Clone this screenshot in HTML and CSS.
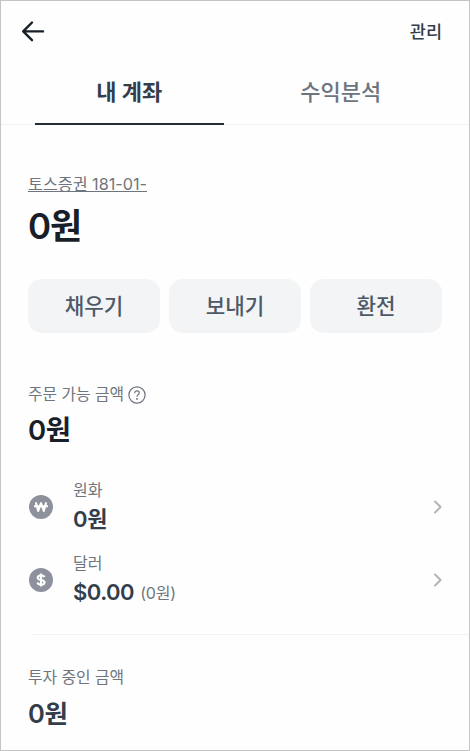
FILE: index.html
```html
<!DOCTYPE html>
<html lang="ko">

<head>
	<meta charset="utf-8">
	<title>내 계좌</title>
	<link rel="stylesheet" href="styles.css">
</head>

<body>
	<div class="screen">
		<header class="topbar">
			<svg class="back" width="24" height="24" viewBox="0 0 24 24">
				<path d="M22 12.4H2.4M11 3.5L2.2 12.4L11 21.2" />
			</svg>
			<span class="manage">관리</span>
		</header>

		<nav class="tabs">
			<div class="tab active">내 계좌</div>
			<div class="tab">수익분석</div>
		</nav>

		<section class="account">
			<div><a class="label account-number">토스증권 181-01-</a></div>
			<div class="total">0원</div>
			<div class="buttons">
				<button>채우기</button>
				<button>보내기</button>
				<button>환전</button>
			</div>
		</section>

		<section class="orderable">
			<div class="label">
				<span>주문 가능 금액</span>
				<svg class="help" width="18" height="18" viewBox="0 0 18 18">
					<circle cx="9" cy="9" r="8.1" />
					<path d="M6.7 7.2C6.7 5.7 7.7 4.8 9 4.8S11.3 5.7 11.3 7C11.3 8.6 9 8.6 9 10.7" />
					<circle class="dot" cx="9" cy="13" r="0.9" />
				</svg>
			</div>
			<div class="amount">0원</div>

			<div class="currency">
				<svg class="coin" width="24" height="24" viewBox="0 0 24 24">
					<circle cx="12" cy="12" r="12" />
					<path d="M6.8 7.4L9.2 15.9L12 8.2L14.8 15.9L17.2 7.4M5 11.3H19" />
				</svg>
				<div class="info">
					<div class="name">원화</div>
					<div class="value">0원</div>
				</div>
				<svg class="chevron" width="10" height="14" viewBox="0 0 10 14">
					<path d="M2 1.5L7.6 7L2 12.5" />
				</svg>
			</div>

			<div class="currency">
				<svg class="coin" width="24" height="24" viewBox="0 0 24 24">
					<circle cx="12" cy="12" r="12" />
					<path d="M15.4 9.2C15 8 13.6 7.4 12 7.4C10 7.4 8.7 8.3 8.7 9.7C8.7 12.8 15.6 11 15.6 14.3C15.6 15.7 14 16.6 12.1 16.6C10.2 16.6 8.8 15.8 8.4 14.5M12 5.6V18.4" />
				</svg>
				<div class="info">
					<div class="name">달러</div>
					<div class="value dollar">$0.00 <span class="converted">(0원)</span></div>
				</div>
				<svg class="chevron" width="10" height="14" viewBox="0 0 10 14">
					<path d="M2 1.5L7.6 7L2 12.5" />
				</svg>
			</div>
		</section>

		<section class="invested">
			<div class="label">투자 중인 금액</div>
			<div class="amount">0원</div>
		</section>
	</div>
</body>

</html>
```
FILE: styles.css
```css
* {
	box-sizing: border-box;
}

body {
	margin: 0;
	font-family: Inter, "Noto Sans CJK KR", sans-serif;
	color: #191f28;
}

.screen {
	width: 470px;
	height: 751px;
	overflow: hidden;
	background: #fefefe;
	border: 1px solid #c4c4c4;
}

.topbar {
	display: flex;
	align-items: center;
	justify-content: space-between;
	height: 61px;
	padding: 0 27px 2px 20px;
}

.back path {
	fill: none;
	stroke: #191f28;
	stroke-width: 2.4;
	stroke-linecap: round;
	stroke-linejoin: round;
}

.manage {
	font-size: 17.5px;
	font-weight: 500;
	color: #333d4b;
}

.tabs {
	display: flex;
	height: 63px;
	padding: 0 34px;
	border-bottom: 1px solid #f0f1f3;
}

.tab {
	width: 189px;
	height: 63px;
	line-height: 60px;
	text-align: center;
	font-size: 22px;
	font-weight: 500;
	color: #6c747e;
}

.tab + .tab {
	margin-left: 23px;
}

.tab.active {
	font-weight: 700;
	color: #333d4b;
	border-bottom: 2px solid #252d37;
}

.account {
	padding: 47px 27px 0;
}

.label {
	display: flex;
	align-items: center;
	height: 24px;
	line-height: 24px;
	font-size: 15.8px;
	color: #6f757d;
}

.account-number {
	display: inline-block;
	font-size: 16.2px;
	text-decoration: underline;
	text-decoration-thickness: 1px;
	text-decoration-skip-ink: none;
	text-underline-offset: 1px;
}

.total {
	height: 60px;
	line-height: 61px;
	font-size: 35px;
	font-weight: 600;
	letter-spacing: -1px;
}

.buttons {
	display: flex;
	gap: 9px;
	margin-top: 23px;
}

.buttons button {
	flex: 1;
	height: 54px;
	padding: 0 0 3px;
	border: 0;
	border-radius: 14px;
	background: #f2f4f6;
	color: #4e5968;
	font-family: inherit;
	font-size: 21.2px;
	font-weight: 500;
}

.orderable {
	margin-left: 27px;
	padding: 50px 26px 0 0;
}

.help {
	margin-left: 4px;
	fill: none;
	stroke: #6f757d;
	stroke-width: 1.2;
}

.help .dot {
	fill: #6f757d;
	stroke: none;
}

.amount {
	height: 46px;
	line-height: 47px;
	font-size: 27.5px;
	font-weight: 600;
	letter-spacing: -0.3px;
}

.currency {
	display: flex;
	align-items: center;
	height: 73px;
}

.amount + .currency {
	margin-top: 17px;
}

.coin {
	margin-left: 1px;
}

.coin circle {
	fill: #8c919c;
}

.coin path {
	fill: none;
	stroke: #fff;
	stroke-width: 2.1;
	stroke-linejoin: round;
}

.info {
	flex: 1;
	margin-left: 20px;
}

.name {
	height: 24px;
	line-height: 24px;
	font-size: 16px;
	color: #6f757d;
}

.value {
	height: 34px;
	line-height: 34px;
	font-size: 22px;
	font-weight: 600;
	letter-spacing: -0.3px;
	color: #333d4b;
}

.value.dollar {
	letter-spacing: -0.5px;
}

.converted {
	position: relative;
	top: -1px;
	margin-left: 1px;
	font-size: 16px;
	font-weight: 400;
	letter-spacing: -0.2px;
	color: #6f757d;
}

.chevron path {
	fill: none;
	stroke: #b0b3b8;
	stroke-width: 1.9;
	stroke-linecap: round;
	stroke-linejoin: round;
}

.invested {
	margin-left: 31px;
	padding-top: 31px;
	border-top: 1px solid #f0f1f3;
	margin-top: 18px;
}

.invested .label,
.invested .amount {
	margin-left: -4px;
}

.invested .amount {
	font-size: 25.5px;
	color: #333d4b;
}
```
